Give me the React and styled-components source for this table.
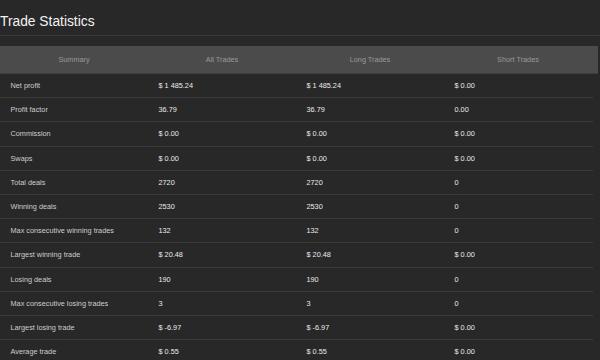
import React from "react";
import styled, { createGlobalStyle } from "styled-components";

const rows = [
  ["Net profit", "$ 1 485.24", "$ 1 485.24", "$ 0.00"],
  ["Profit factor", "36.79", "36.79", "0.00"],
  ["Commission", "$ 0.00", "$ 0.00", "$ 0.00"],
  ["Swaps", "$ 0.00", "$ 0.00", "$ 0.00"],
  ["Total deals", "2720", "2720", "0"],
  ["Winning deals", "2530", "2530", "0"],
  ["Max consecutive winning trades", "132", "132", "0"],
  ["Largest winning trade", "$ 20.48", "$ 20.48", "$ 0.00"],
  ["Losing deals", "190", "190", "0"],
  ["Max consecutive losing trades", "3", "3", "0"],
  ["Largest losing trade", "$ -6.97", "$ -6.97", "$ 0.00"],
  ["Average trade", "$ 0.55", "$ 0.55", "$ 0.00"],
];

const Global = createGlobalStyle`
  html, body {
    margin: 0;
    padding: 0;
    background: #282828;
    overflow: hidden;
  }
  body {
    font-family: "Liberation Sans", Arial, sans-serif;
  }
`;

const Page = styled.div`
  width: 600px;
  height: 360px;
  background: #282828;
  overflow: hidden;
`;

const Title = styled.h1`
  margin: 0;
  padding: 14px 0 5px 0;
  font-size: 13.8px;
  line-height: 16px;
  font-weight: 400;
  color: #f2f2f2;
  border-bottom: 1px solid #3a3a3a;
`;

const Table = styled.div`
  margin-top: 10px;
  width: 598px;
`;

const Head = styled.div`
  display: grid;
  grid-template-columns: repeat(4, 148px) 6px;
  height: 27px;
  align-items: center;
  background: #4b4b4b;
  border-bottom: 1px solid #3f3f3f;
`;

const HeadCell = styled.div`
  text-align: center;
  font-size: 7.3px;
  color: #9a9a9a;
`;

const Row = styled.div`
  display: grid;
  grid-template-columns: repeat(4, 148px);
  width: 593px;
  height: 23.2px;
  align-items: center;
  border-bottom: 1px solid #3b3b3b;
`;

const Cell = styled.div`
  padding-left: 10.5px;
  font-size: 7.3px;
  white-space: nowrap;
  color: ${({ $label }) => ($label ? "#cdcdcd" : "#ebebeb")};
`;

export default function App() {
  return (
    <Page>
      <Global />
      <Title>Trade Statistics</Title>
      <Table>
        <Head>
          <HeadCell>Summary</HeadCell>
          <HeadCell>All Trades</HeadCell>
          <HeadCell>Long Trades</HeadCell>
          <HeadCell>Short Trades</HeadCell>
          <span />
        </Head>
        {rows.map((r) => (
          <Row key={r[0]}>
            <Cell $label>{r[0]}</Cell>
            <Cell>{r[1]}</Cell>
            <Cell>{r[2]}</Cell>
            <Cell>{r[3]}</Cell>
          </Row>
        ))}
      </Table>
    </Page>
  );
}
